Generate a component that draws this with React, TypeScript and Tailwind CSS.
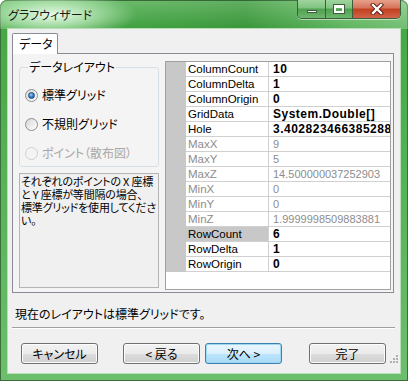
import React from "react";

const jp = "font-['Noto_Sans_CJK_JP',sans-serif] [font-feature-settings:'palt']";
const lat = "font-['Liberation_Sans','Noto_Sans_CJK_JP',sans-serif]";

type Row = { name: string; value: string; enabled: boolean; selected?: boolean };
const rows: Row[] = [
  { name: "ColumnCount", value: "10", enabled: true },
  { name: "ColumnDelta", value: "1", enabled: true },
  { name: "ColumnOrigin", value: "0", enabled: true },
  { name: "GridData", value: "System.Double[]", enabled: true },
  { name: "Hole", value: "3.4028234663852886E+38", enabled: true },
  { name: "MaxX", value: "9", enabled: false },
  { name: "MaxY", value: "5", enabled: false },
  { name: "MaxZ", value: "14.500000037252903", enabled: false },
  { name: "MinX", value: "0", enabled: false },
  { name: "MinY", value: "0", enabled: false },
  { name: "MinZ", value: "1.9999998509883881", enabled: false },
  { name: "RowCount", value: "6", enabled: true, selected: true },
  { name: "RowDelta", value: "1", enabled: true },
  { name: "RowOrigin", value: "0", enabled: true },
];

function Radio({ state, label }: { state: "on" | "off" | "disabled"; label: string }) {
  return (
    <div className="flex items-center h-[14px]">
      <div
        className={
          "w-[13px] h-[13px] rounded-full border flex items-center justify-center " +
          (state === "disabled"
            ? "border-[#cfcfcf] bg-[#f4f4f4]"
            : "border-[#8e8f8f] bg-[linear-gradient(135deg,#d6d6d6,#ffffff)]")
        }
      >
        {state === "on" && (
          <div className="w-[7px] h-[7px] rounded-full bg-[radial-gradient(circle_at_40%_35%,#9fd0ff_0%,#2a77c4_55%,#164f86_100%)] border border-[#1f4f7a]" />
        )}
      </div>
      <span
        className={
          "ml-[4px] text-[12px] leading-[14px] " + (state === "disabled" ? "text-[#a7a7a7]" : "text-black")
        }
      >
        {label}
      </span>
    </div>
  );
}

function Btn({ label, def }: { label: string; def?: boolean }) {
  return (
    <div
      className={
        "w-[77px] h-[21px] rounded-[3px] border flex items-center justify-center text-[12px] leading-[14px] text-black " +
        (def
          ? "border-[#3c7fb1] shadow-[inset_0_0_0_1px_#9fd7f5] bg-[linear-gradient(to_bottom,#eaf6fd_0%,#d9f0fc_50%,#bee6fd_51%,#a7d9f5_100%)]"
          : "border-[#707070] shadow-[inset_0_0_0_1px_#fcfcfc] bg-[linear-gradient(to_bottom,#f2f2f2_0%,#ebebeb_50%,#dddddd_51%,#cfcfcf_100%)]")
      }
    >
      {label}
    </div>
  );
}

export default function App() {
  return (
    <div
      className={
        "w-[408px] h-[381px] flex flex-col rounded-t-[7px] overflow-hidden shadow-[inset_0_0_0_1px_#3c6e3c] bg-[linear-gradient(to_bottom,#74c474_0px,#45a845_28px,#58b458_200px,#6cbf6c_381px)] " +
        jp
      }
    >
      {/* title bar */}
      <div className="h-[29px] flex items-start justify-between bg-[radial-gradient(ellipse_85px_24px_at_52px_15px,rgba(240,255,240,0.95)_0%,rgba(200,240,200,0.65)_50%,rgba(255,255,255,0)_100%),linear-gradient(90deg,rgba(0,0,0,0)_0%,rgba(0,60,0,0.10)_45%,rgba(0,60,0,0.16)_60%,rgba(255,255,255,0.15)_85%,rgba(255,255,255,0.25)_100%)]">
        <div className="pl-[8px] pt-[8px] text-[12px] leading-[14px] text-[#1a1a1a]">グラフウィザード</div>
        <div className="flex mr-[7px] h-[19px] rounded-b-[5px] border border-t-0 border-[#3a5f3a] overflow-hidden shadow-[0_1px_0_rgba(255,255,255,0.5)]">
          <div className="w-[28px] h-full flex items-center justify-center border-r border-[#3a5f3a] bg-[linear-gradient(to_bottom,#9fd49f_0%,#7fc27f_45%,#4f9f4f_50%,#6fb86f_100%)]">
            <div className="w-[10px] h-[3px] bg-white border border-[#3d5d3d] mt-[5px]" />
          </div>
          <div className="w-[27px] h-full flex items-center justify-center border-r border-[#3a5f3a] bg-[linear-gradient(to_bottom,#9fd49f_0%,#7fc27f_45%,#4f9f4f_50%,#6fb86f_100%)]">
            <div className="w-[10px] h-[8px] border-[2px] border-t-[3px] border-white outline outline-1 outline-[#3d5d3d]" />
          </div>
          <div className="w-[47px] h-full flex items-center justify-center bg-[linear-gradient(to_bottom,#e8a08a_0%,#d6735a_45%,#c2401f_50%,#d2634a_100%)]">
            <svg width="14" height="12" viewBox="0 0 14 12">
              <path d="M3 2 L11 10 M11 2 L3 10" stroke="#5a1a10" strokeWidth="4.2" strokeLinecap="square" />
              <path d="M3 2 L11 10 M11 2 L3 10" stroke="#ffffff" strokeWidth="2.4" strokeLinecap="square" />
            </svg>
          </div>
        </div>
      </div>

      {/* client area */}
      <div className="mx-[8px] h-[344px] bg-[#f0f0f0] flex flex-col shadow-[0_0_0_1px_#b9dcb9]">
        {/* tab header */}
        <div className="pl-[4px] pt-[4px] flex">
          <div className="w-[46px] h-[21px] bg-white border border-b-0 border-[#898c95] rounded-t-[2px] flex items-center pl-[6px] text-[12px] leading-[14px] text-black relative z-10 mb-[-1px]">
            データ
          </div>
        </div>
        {/* tab panel */}
        <div className="ml-[4px] w-[382px] h-[240px] border border-[#898c95] bg-[#f4f4f4] flex pt-[7px] pl-[6px] pr-[2px] pb-[2px]">
          {/* left column */}
          <div className="w-[140px] flex flex-col">
            <fieldset className="h-[106px] border border-[#d5dfe5] rounded-[3px] pl-[5px] flex flex-col">
              <legend className="ml-[3px] px-[1px] text-[12px] leading-[12px] text-black">データレイアウト</legend>
              <div className="flex flex-col gap-[15px] pt-[15px]">
                <Radio state="on" label="標準グリッド" />
                <Radio state="off" label="不規則グリッド" />
                <Radio state="disabled" label="ポイント（散布図）" />
              </div>
            </fieldset>
            <div className="mt-[6px] h-[115px] border border-[#b5b5b5] bg-[#f0f0f0] px-[1px] pt-[1px] text-[11px] leading-[13px] tracking-[-0.2px] text-black whitespace-nowrap overflow-hidden">
              それぞれのポイントの X 座標
              <br />と Y 座標が等間隔の場合、
              <br />標準グリッドを使用してくださ
              <br />い。
            </div>
          </div>
          {/* property grid */}
          <div className={"ml-[6px] w-[226px] h-[229px] border border-[#a0a0a0] bg-white flex flex-col " + lat}>
            {rows.map((r) => (
              <div key={r.name} className="flex h-[15px]">
                <div className="w-[20px] h-full bg-[#c8c8c8]" />
                <div
                  className={
                    "w-[83px] h-full border-b border-r border-[#d0d0d0] pl-[2px] text-[11.5px] leading-[14px] whitespace-nowrap overflow-hidden " +
                    (r.selected ? "bg-[#c8c8c8] " : "") +
                    (r.enabled ? "text-black" : "text-[#8d8d8d]")
                  }
                >
                  {r.name}
                </div>
                <div
                  className={
                    "flex-1 h-full border-b border-[#d0d0d0] pl-[4px] whitespace-nowrap overflow-hidden " +
                    (r.enabled
                      ? "text-black font-bold text-[12px] tracking-[0.5px] leading-[14px]"
                      : "text-[#8d8d8d] text-[11px] leading-[14px]")
                  }
                >
                  {r.value}
                </div>
              </div>
            ))}
          </div>
        </div>

        {/* status */}
        <div className="pl-[7px] pt-[14px] text-[12px] leading-[14px] text-black">現在のレイアウトは標準グリッドです。</div>
        <div className="ml-[4px] w-[383px] mt-[6px] h-[2px] border-t border-[#a0a0a0] border-b border-b-white" />

        {/* buttons */}
        <div className="flex items-start pt-[14px] pl-[13px] relative">
          <Btn label="キャンセル" />
          <div className="ml-[25px]">
            <Btn label="< 戻る" />
          </div>
          <div className="ml-[5px]">
            <Btn label="次へ >" def />
          </div>
          <div className="ml-[27px]">
            <Btn label="完了" />
          </div>
          <svg className="absolute right-[1px] top-[25px]" width="10" height="10" viewBox="0 0 10 10">
            <g fill="#b0b0b0">
              <rect x="7" y="1" width="2" height="2" />
              <rect x="4" y="4" width="2" height="2" />
              <rect x="7" y="4" width="2" height="2" />
              <rect x="1" y="7" width="2" height="2" />
              <rect x="4" y="7" width="2" height="2" />
              <rect x="7" y="7" width="2" height="2" />
            </g>
          </svg>
        </div>
      </div>
    </div>
  );
}
